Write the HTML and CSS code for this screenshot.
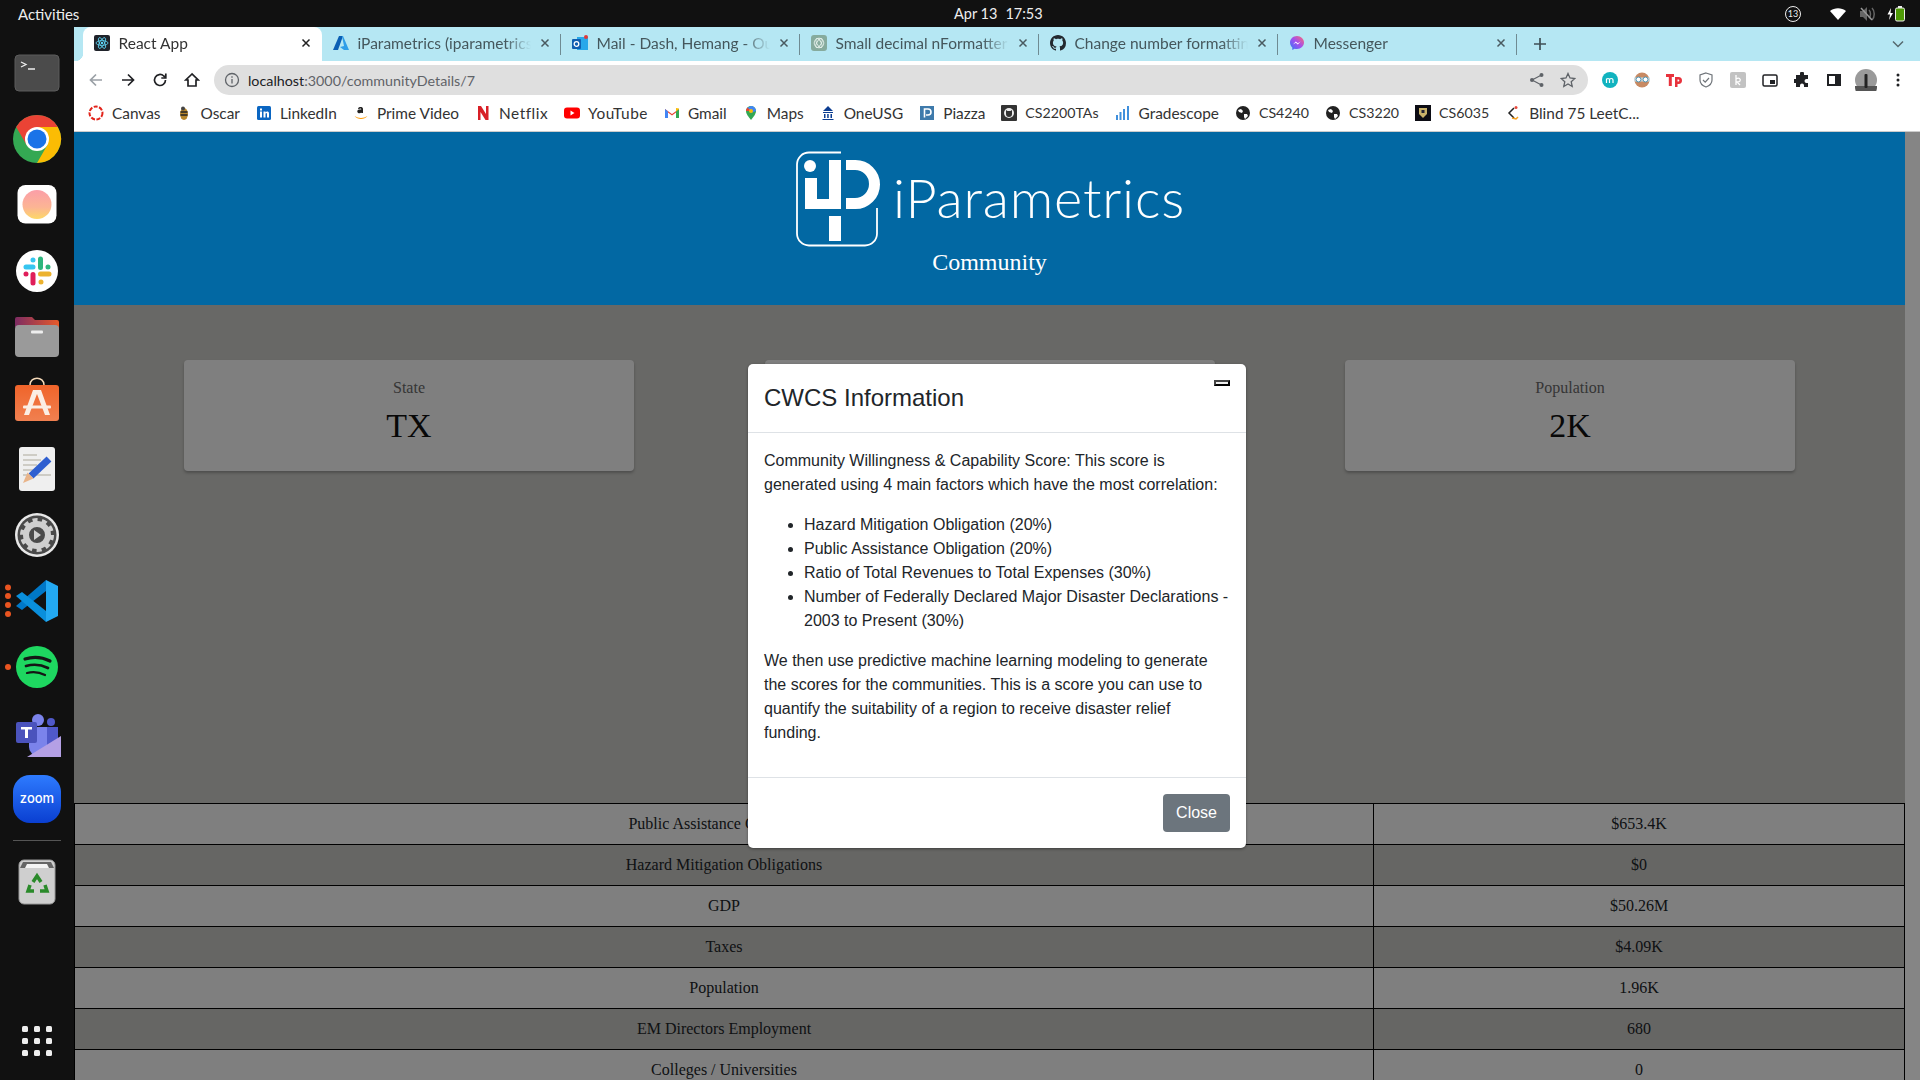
FILE: index.html
```html
<!DOCTYPE html>
<html lang="en">
<head>
    <meta charset="UTF-8">
    <meta name="viewport" content="width=device-width, initial-scale=1.0">
    <title>React App</title>
    <link rel="stylesheet" href="styles.css">
</head>
<body>
    <!-- Desktop top bar -->
    <div class="topbar">
        <div class="activities">Activities</div>
        <div class="clock"><span>Apr 13</span><span>17:53</span></div>
        <div class="status">
            <svg class="status-badge" width="18" height="18" viewBox="0 0 18 18"><circle cx="9" cy="9" r="7.500" fill="none" stroke="#eee"/><text x="9" y="12" class="badge-num">13</text></svg>
            <svg width="18" height="18" viewBox="0 0 18 18"><path d="M1 6c4.500-3.800 11.500-3.800 16 0l-8 9z" fill="#fff"/></svg>
            <svg width="18" height="18" viewBox="0 0 18 18"><path d="M2 6h3l4-4v14l-4-4H2z" fill="#666"/><path d="M11 5c2 2 2 6 0 8M14 3c3 3 3 9 0 12" fill="none" stroke="#666" stroke-width="1.500"/><path d="M3 3l11 12" stroke="#999" stroke-width="1.500"/></svg>
            <svg width="20" height="18" viewBox="0 0 20 18"><path d="M4 3L0.500 9.500H3L2 15l4-7H3.500z" fill="#fff"/><rect x="8.500" y="3" width="9" height="13" rx="1.500" fill="#4e9a06" stroke="#eee"/><rect x="11" y="1" width="4" height="2" fill="#eee"/></svg>
        </div>
    </div>

    <div class="desktop">
        <!-- Ubuntu dock -->
        <nav class="dock">
            <svg class="dock-item" viewBox="0 0 74 66"><rect x="15" y="15" width="44" height="36" rx="4" fill="#4b4b4b" stroke="#5c5c5c"/><path d="M21 22l5 2.500-5 2.500M28 29h7" fill="none" stroke="#eee" stroke-width="1.300"/></svg>
            <svg class="dock-item" viewBox="0 0 74 66"><circle cx="37" cy="33" r="24" fill="#34a853"/><path d="M16.200 21A24 24 0 0 1 57.800 21H37L26.600 39z" fill="#ea4335"/><path d="M57.800 21A24 24 0 0 1 37 57L47.400 39 37 21z" fill="#fbbc04"/><circle cx="37" cy="33" r="12" fill="#fff"/><circle cx="37" cy="33" r="9.500" fill="#1a73e8"/></svg>
            <svg class="dock-item" viewBox="0 0 74 66"><defs><linearGradient id="rose" x1="0" y1="0" x2="0" y2="1"><stop offset="0" stop-color="#fb9ea8"/><stop offset=".6" stop-color="#fcb594"/><stop offset="1" stop-color="#fdd867"/></linearGradient></defs><rect x="17.500" y="13" width="39" height="38.500" rx="8" fill="#fff"/><circle cx="37" cy="32.500" r="14.500" fill="url(#rose)"/></svg>
            <svg class="dock-item" viewBox="0 0 74 66"><circle cx="37" cy="33" r="21" fill="#fff"/><g stroke-width="5" stroke-linecap="round" fill="none"><path d="M26 29h7M33 22h0" stroke="#36c5f0"/><path d="M40.500 21v8.500M48 29h0" stroke="#2eb67d"/><path d="M40.500 36h8.500M41 44h0" stroke="#ecb22e"/><path d="M33 36.500v8.500M26 36h0" stroke="#e01e5a"/></g></svg>
            <svg class="dock-item" viewBox="0 0 74 66"><defs><linearGradient id="folder" x1="0" y1="0" x2="1" y2="0"><stop offset="0" stop-color="#7d2c63"/><stop offset="1" stop-color="#e65a2a"/></linearGradient></defs><path d="M15 23v-8a2 2 0 0 1 2-2h15l3 3h22a2 2 0 0 1 2 2v8z" fill="url(#folder)"/><rect x="15" y="21" width="44" height="32" rx="4" fill="#9a9a9a"/><rect x="31" y="26.500" width="12" height="3" rx="1" fill="#eee"/></svg>
            <svg class="dock-item" viewBox="0 0 74 66"><defs><linearGradient id="bag" x1="0" y1="0" x2="0" y2="1"><stop offset="0" stop-color="#f0642a"/><stop offset="1" stop-color="#f08050"/></linearGradient></defs><path d="M30 15c0-9 14-9 14 0" fill="none" stroke="#f5d9b8" stroke-width="1.500"/><rect x="15" y="15" width="44" height="36" rx="3" fill="url(#bag)"/><path d="M33 20h8l9 25h-5l-8-21-8 21h-5z" fill="#fbeee4"/><rect x="23" y="35.500" width="28" height="3" rx="1" fill="#fbeee4"/></svg>
            <svg class="dock-item" viewBox="0 0 74 66"><rect x="19" y="11" width="36" height="44" rx="3" fill="#efefef"/><path d="M23 19h14M23 24h18M23 29h14M23 34h10M23 39h28" stroke="#c4c1b8" stroke-width="1.500"/><path d="M49 23L31 40" stroke="#2f5fd0" stroke-width="7"/><path d="M27.500 36.500l6 6L23 47z" fill="#e8b48a"/></svg>
            <svg class="dock-item" viewBox="0 0 74 66"><circle cx="37" cy="33" r="22" fill="#e8e8e8"/><circle cx="37" cy="33" r="19.500" fill="#4a4a4a"/><circle cx="37" cy="33" r="11" fill="none" stroke="#cfcfcf" stroke-width="6"/><circle cx="37" cy="33" r="15" fill="none" stroke="#cfcfcf" stroke-width="4" stroke-dasharray="5 4.400"/><path d="M34 28l7 5-7 5z" fill="#cfcfcf"/></svg>
            <svg class="dock-item" viewBox="0 0 74 66"><g fill="#e95420"><circle cx="8" cy="19.500" r="3"/><circle cx="8" cy="28" r="3"/><circle cx="8" cy="37" r="3"/><circle cx="8" cy="46" r="3"/></g><path d="M46 12l12 6v30l-12 6z" fill="#23a9f2"/><path d="M46 12v11L22 42l-6-4z" fill="#0078c8"/><path d="M16 28l6-4 24 19v11z" fill="#0a8fdc"/></svg>
            <svg class="dock-item" viewBox="0 0 74 66"><circle cx="8" cy="33" r="3" fill="#e95420"/><circle cx="37" cy="33" r="21" fill="#1ed760"/><g fill="none" stroke="#151515" stroke-linecap="round"><path d="M25 25c8-2.500 17-2 25 2" stroke-width="3.200"/><path d="M26 32c7-2 15-1.500 22 2" stroke-width="2.700"/><path d="M27 39c6-1.500 12-1 18 2" stroke-width="2.200"/></g></svg>
            <svg class="dock-item" viewBox="0 0 74 66"><circle cx="38" cy="20" r="6" fill="#7b83eb"/><circle cx="51" cy="22" r="4" fill="#5059c9"/><path d="M29 27h18v20a9 9 0 0 1-18 0z" fill="#7b83eb"/><path d="M47 27h11v16l-11 3z" fill="#5059c9"/><path d="M61 36v21H27z" fill="#b4a0e5"/><rect x="16" y="22" width="21" height="21" rx="2" fill="#4b53bc"/><path d="M21 27h11v2.500h-4V38h-3v-8.500h-4z" fill="#fff"/></svg>
            <svg class="dock-item" viewBox="0 0 74 66"><defs><linearGradient id="zoomblue" x1="0" y1="0" x2="0" y2="1"><stop offset="0" stop-color="#2e7bff"/><stop offset="1" stop-color="#0a3fd1"/></linearGradient></defs><rect x="13" y="9" width="48" height="48" rx="17" fill="url(#zoomblue)"/><text x="37" y="37" class="zoom-word">zoom</text></svg>
            <div class="dock-sep"></div>
            <svg class="dock-item" viewBox="0 0 74 66"><rect x="19" y="11" width="36" height="44" rx="5" fill="#cfcfcf" stroke="#999"/><path d="M20 19l3-6h28l3 6z" fill="#666"/><path d="M25 19l2-4h20l2 4z" fill="#f4f4f4"/><g fill="none" stroke="#2a8a2a" stroke-width="3.500"><path d="M33 33l4-6 4 6"/><path d="M45 36l2 6h-7"/><path d="M34 42h-6l2-6"/></g></svg>
            <svg class="dock-grid" viewBox="0 0 74 66"><g fill="#eee"><rect x="22" y="18" width="6" height="6" rx="1.500"/><rect x="34" y="18" width="6" height="6" rx="1.500"/><rect x="46" y="18" width="6" height="6" rx="1.500"/><rect x="22" y="30" width="6" height="6" rx="1.500"/><rect x="34" y="30" width="6" height="6" rx="1.500"/><rect x="46" y="30" width="6" height="6" rx="1.500"/><rect x="22" y="42" width="6" height="6" rx="1.500"/><rect x="34" y="42" width="6" height="6" rx="1.500"/><rect x="46" y="42" width="6" height="6" rx="1.500"/></g></svg>
        </nav>

        <div class="browser">
            <!-- Tab strip -->
            <div class="tabstrip">
                <div class="tab active">
                    <svg class="favicon" viewBox="0 0 16 16"><rect width="16" height="16" rx="2" fill="#20232a"/><g fill="none" stroke="#61dafb" stroke-width=".8"><ellipse cx="8" cy="8" rx="6" ry="2.400"/><ellipse cx="8" cy="8" rx="6" ry="2.400" transform="rotate(60 8 8)"/><ellipse cx="8" cy="8" rx="6" ry="2.400" transform="rotate(120 8 8)"/></g><circle cx="8" cy="8" r="1.200" fill="#61dafb"/></svg>
                    <span class="tab-title">React App</span>
                    <svg class="tab-close" viewBox="0 0 10 10"><path d="M1.500 1.500l7 7M8.500 1.500l-7 7"/></svg>
                </div>
                <div class="tab">
                    <svg class="favicon" viewBox="0 0 16 16"><path d="M6 1h4L5 15H0z" fill="#0a5fb4"/><path d="M9 1h1l6 14h-5l-4-3 4-1z" fill="#2f9ee8"/></svg>
                    <span class="tab-title">iParametrics (iparametrics)</span>
                    <svg class="tab-close" viewBox="0 0 10 10"><path d="M1.500 1.500l7 7M8.500 1.500l-7 7"/></svg>
                </div>
                <div class="tab">
                    <svg class="favicon" viewBox="0 0 16 16"><rect x="5" y="2" width="11" height="13" fill="#28a8ea"/><rect y="4" width="9" height="10" rx="1" fill="#0f5fb0"/><circle cx="4.500" cy="9" r="2.300" fill="none" stroke="#fff" stroke-width="1.300"/><circle cx="14" cy="2" r="2" fill="#e03a3a"/></svg>
                    <span class="tab-title">Mail - Dash, Hemang - Outlook</span>
                    <svg class="tab-close" viewBox="0 0 10 10"><path d="M1.500 1.500l7 7M8.500 1.500l-7 7"/></svg>
                </div>
                <div class="tab">
                    <svg class="favicon" viewBox="0 0 16 16"><rect width="16" height="16" rx="3" fill="#86ab9d"/><g fill="none" stroke="#e4efea" stroke-width=".9"><circle cx="8" cy="8" r="4.800"/><ellipse cx="8" cy="8" rx="5" ry="2.200" transform="rotate(60 8 8)"/><ellipse cx="8" cy="8" rx="5" ry="2.200" transform="rotate(120 8 8)"/></g></svg>
                    <span class="tab-title">Small decimal nFormatter</span>
                    <svg class="tab-close" viewBox="0 0 10 10"><path d="M1.500 1.500l7 7M8.500 1.500l-7 7"/></svg>
                </div>
                <div class="tab">
                    <svg class="favicon" viewBox="0 0 16 16"><path fill="#24292f" d="M8 0C3.580 0 0 3.580 0 8c0 3.540 2.290 6.530 5.470 7.590.4.070.55-.17.55-.38 0-.19-.01-.82-.01-1.490-2.010.37-2.530-.49-2.690-.94-.09-.23-.48-.94-.82-1.130-.28-.15-.68-.52-.01-.53.63-.01 1.080.58 1.230.82.72 1.210 1.870.87 2.330.66.07-.52.28-.87.51-1.070-1.780-.2-3.640-.89-3.640-3.950 0-.87.31-1.590.82-2.150-.08-.2-.36-1.020.08-2.120 0 0 .67-.21 2.200.82.64-.18 1.320-.27 2-.27.68 0 1.360.09 2 .27 1.530-1.040 2.200-.82 2.200-.82.44 1.100.16 1.920.08 2.120.51.56.82 1.270.82 2.150 0 3.070-1.870 3.750-3.650 3.950.29.25.54.73.54 1.480 0 1.070-.01 1.930-.01 2.200 0 .21.15.46.55.38A8.013 8.013 0 0016 8c0-4.420-3.580-8-8-8z"/></svg>
                    <span class="tab-title">Change number formatting</span>
                    <svg class="tab-close" viewBox="0 0 10 10"><path d="M1.500 1.500l7 7M8.500 1.500l-7 7"/></svg>
                </div>
                <div class="tab">
                    <svg class="favicon" viewBox="0 0 16 16"><defs><linearGradient id="msgr" x1="0" y1="1" x2="1" y2="0"><stop offset="0" stop-color="#2d7cf6"/><stop offset=".5" stop-color="#a050f0"/><stop offset="1" stop-color="#ff6a70"/></linearGradient></defs><path d="M8 1C4 1 1 3.900 1 7.600c0 2 .9 3.700 2.300 4.900V15l2.300-1.300c.8.2 1.600.3 2.400.3 4 0 7-2.900 7-6.400S12 1 8 1z" fill="url(#msgr)"/><path d="M4 9.500l2.800-3 2 1.700 2.800-1.700-2.800 3-2-1.700z" fill="#fff"/></svg>
                    <span class="tab-title">Messenger</span>
                    <svg class="tab-close" viewBox="0 0 10 10"><path d="M1.500 1.500l7 7M8.500 1.500l-7 7"/></svg>
                </div>
                <svg class="new-tab" viewBox="0 0 14 14"><path d="M7 1v12M1 7h12"/></svg>
                <svg class="tab-search" viewBox="0 0 12 8"><path d="M1 1.500l5 5 5-5"/></svg>
            </div>

            <!-- Toolbar -->
            <div class="toolbar">
                <svg class="nav-btn" viewBox="0 0 16 16"><path d="M14 8H2.500M8 2.500L2.500 8 8 13.500" stroke="#9aa0a6"/></svg>
                <svg class="nav-btn" viewBox="0 0 16 16"><path d="M2 8h11.500M8 2.500L13.500 8 8 13.500"/></svg>
                <svg class="nav-btn" viewBox="0 0 16 16"><path d="M13.500 8A5.500 5.500 0 1 1 11.800 4L13.500 5.500"/><path d="M13.800 1.500v4.500H9.300" /></svg>
                <svg class="nav-btn" viewBox="0 0 16 16"><path d="M8 2L1.800 8H4v6h8V8h2.200z"/></svg>
                <div class="omnibox">
                    <svg class="info-icon" viewBox="0 0 16 16"><circle cx="8" cy="8" r="6.500"/><path d="M8 7v4.500M8 4.200v1.500"/></svg>
                    <span class="url"><span class="url-host">localhost</span>:3000/communityDetails/7</span>
                    <svg class="omni-icon" viewBox="0 0 16 16"><circle cx="3" cy="8" r="2" fill="#5f6368"/><circle cx="12.500" cy="3" r="2" fill="#5f6368"/><circle cx="12.500" cy="13" r="2" fill="#5f6368"/><path d="M3 8l9.500-5M3 8l9.500 5" stroke="#5f6368" fill="none" stroke-width="1.200"/></svg>
                    <svg class="omni-icon" viewBox="0 0 16 16"><path d="M8 1.500l2 4.500 4.800.5-3.600 3.200 1 4.800L8 12l-4.200 2.500 1-4.800L1.200 6.500 6 6z" fill="none" stroke="#5f6368" stroke-width="1.300"/></svg>
                </div>
                <div class="extensions">
                    <svg class="ext" viewBox="0 0 16 16"><circle cx="8" cy="8" r="8" fill="#11b3bf"/><path d="M4.500 11V6.500M4.500 8c0-2 3-2 3 0v3M7.500 8c0-2 3.500-2 3.500 0v3" stroke="#fff" fill="none" stroke-width="1.200"/></svg>
                    <svg class="ext" viewBox="0 0 16 16"><circle cx="8" cy="8" r="7.500" fill="#c88a63"/><rect x="0" y="5.500" width="16" height="4" fill="#cfd8dc"/><circle cx="4.500" cy="7.500" r="2.500" fill="#fff" stroke="#4a90b0"/><circle cx="11.500" cy="7.500" r="2.500" fill="#fff" stroke="#4a90b0"/></svg>
                    <svg class="ext" viewBox="0 0 16 16"><path d="M0 2h8v3H5.800v9H2.800V5H0zM9 5h3.500a3 3 0 0 1 0 7H11.500v3H9zm2.500 2.500v2h.8a1 1 0 0 0 0-2z" fill="#e8323c"/></svg>
                    <svg class="ext" viewBox="0 0 16 16"><path d="M8 1l6 2v5c0 3.500-2.500 5.800-6 7-3.500-1.200-6-3.500-6-7V3z" fill="none" stroke="#70757a" stroke-width="1.200"/><path d="M5 8l2.200 2.200L11 6" fill="none" stroke="#70757a" stroke-width="1.200"/></svg>
                    <svg class="ext" viewBox="0 0 16 16"><rect width="16" height="16" rx="2" fill="#c2c2c2"/><path d="M6 3v10M6 7c3-2 5 0 4 2-.5 1-2 1-3 1l3 3" fill="none" stroke="#fff" stroke-width="1.300"/></svg>
                    <svg class="ext" viewBox="0 0 16 16"><rect x="1" y="3" width="14" height="11" rx="1.500" fill="none" stroke="#202124" stroke-width="1.500"/><rect x="8" y="8" width="5" height="4" fill="#202124"/></svg>
                    <svg class="ext" viewBox="0 0 16 16"><path d="M6 1.500a2 2 0 0 1 4 0V3h4v4h-1.500a2 2 0 0 0 0 4H14v4h-4v-1.500a2 2 0 0 0-4 0V15H2v-4H.5a2 2 0 0 1 0-4H2V3h4z" fill="#202124"/></svg>
                    <svg class="ext" viewBox="0 0 16 16"><rect x="1" y="2" width="14" height="12" fill="#202124"/><rect x="3" y="4" width="6" height="8" fill="#fff"/></svg>
                    <svg class="avatar" viewBox="0 0 22 22"><circle cx="11" cy="11" r="11" fill="#9a9a9a"/><path d="M0 17h22v1a11 11 0 0 1-22 0z" fill="#555"/><rect x="9.500" y="5" width="3" height="14" rx="1" fill="#222"/></svg>
                    <svg class="ext" viewBox="0 0 16 16"><circle cx="8" cy="3" r="1.500" fill="#202124"/><circle cx="8" cy="8" r="1.500" fill="#202124"/><circle cx="8" cy="13" r="1.500" fill="#202124"/></svg>
                </div>
            </div>

            <!-- Bookmarks bar -->
            <div class="bookmarks">
                <a class="bookmark"><svg viewBox="0 0 16 16"><circle cx="8" cy="8" r="6.500" fill="none" stroke="#e2231a" stroke-width="2" stroke-dasharray="4 1.500"/></svg>Canvas</a>
                <a class="bookmark"><svg viewBox="0 0 16 16"><ellipse cx="8" cy="9" rx="4" ry="6" fill="#b8862b"/><path d="M4.500 7h7M4.500 10h7" stroke="#222" stroke-width="1.500"/><circle cx="7" cy="3.500" r="2" fill="#444"/></svg>Oscar</a>
                <a class="bookmark"><svg viewBox="0 0 16 16"><rect x="1" y="1" width="14" height="14" rx="1.500" fill="#0a66c2"/><path d="M4 6.500h2v6H4zM4 3.500h2v2H4zM7.500 6.500h2v1c1-1.500 3.500-1.300 3.500 1v4h-2V9c0-1.200-1.500-1.200-1.500 0v3.500h-2z" fill="#fff"/></svg>LinkedIn</a>
                <a class="bookmark"><svg viewBox="0 0 16 16"><path d="M5 3.500c1-2 5-2 5 .5v4h-1.700V7.500c-1 1.200-4 1-4-1 0-2 2.500-2 4-2 0-1.500-1.700-1.500-2.500 0z" fill="#222"/><path d="M1.500 11c4 2.500 9 2.500 13 0-3 4-10 4-13 0z" fill="#f90"/></svg>Prime Video</a>
                <a class="bookmark bookmark-wide"><svg viewBox="0 0 16 16"><path d="M3 1h3l5 8V1h2.500v14h-3L5.500 7v8H3z" fill="#d81f26"/></svg>Netflix</a>
                <a class="bookmark bookmark-wide"><svg viewBox="0 0 16 16"><rect y="2.500" width="16" height="11" rx="3" fill="#f00"/><path d="M6.500 5.500l4 2.500-4 2.500z" fill="#fff"/></svg>YouTube</a>
                <a class="bookmark"><svg viewBox="0 0 16 16"><path d="M1 13V4l7 5 7-5v9h-3V7.500L8 10.500 4 7.500V13z" fill="#ea4335"/><path d="M1 13V4l3 2.500V13z" fill="#4285f4"/><path d="M15 13V4l-3 2.500V13z" fill="#34a853"/><path d="M12 6.500L15 4v-.5L12 3z" fill="#fbbc04"/></svg>Gmail</a>
                <a class="bookmark"><svg viewBox="0 0 16 16"><path d="M8 1a5 5 0 0 0-5 5c0 3.500 5 9 5 9s5-5.500 5-9a5 5 0 0 0-5-5z" fill="#34a853"/><path d="M4 3L8 1a5 5 0 0 1 5 5L8 8z" fill="#4285f4"/><path d="M3 6a5 5 0 0 1 1.500-3.500L8 6z" fill="#ea4335"/><circle cx="8" cy="6" r="2" fill="#fbbc04"/></svg>Maps</a>
                <a class="bookmark"><svg viewBox="0 0 16 16"><path d="M8 1l5 5H3zM3 7h10v1H3zM4 9h1.500v4H4zM7.200 9h1.500v4H7.200zM10.500 9H12v4h-1.500zM2.500 14h11v1h-11z" fill="#0b3d91"/></svg>OneUSG</a>
                <a class="bookmark"><svg viewBox="0 0 16 16"><rect x="1" y="1" width="14" height="14" fill="#3e7aab"/><path d="M5.500 12.500V4h3.500a3 3 0 0 1 0 6H7" fill="none" stroke="#fff" stroke-width="1.600"/></svg>Piazza</a>
                <a class="bookmark bookmark-num"><svg viewBox="0 0 16 16"><rect width="16" height="16" rx="1" fill="#333"/><circle cx="8" cy="8" r="5" fill="#eee"/><path d="M5 5l1.500 1h3L11 5v4a3 3 0 0 1-6 0z" fill="#333"/></svg>CS2200TAs</a>
                <a class="bookmark"><svg viewBox="0 0 16 16"><g fill="#3f8fdc"><rect x="1" y="10" width="2" height="5"/><rect x="4.500" y="7" width="2" height="8"/><rect x="8" y="4" width="2" height="11"/><rect x="12" y="1" width="2" height="14"/></g></svg>Gradescope</a>
                <a class="bookmark bookmark-num"><svg viewBox="0 0 16 16"><circle cx="8" cy="8" r="7" fill="#222"/><path d="M3 5l3-1 2 2-1 2-3-1zM9 9l3 0 1 2-3 3-1-2z" fill="#fff"/></svg>CS4240</a>
                <a class="bookmark bookmark-num"><svg viewBox="0 0 16 16"><circle cx="8" cy="8" r="7" fill="#222"/><path d="M3 5l3-1 2 2-1 2-3-1zM9 9l3 0 1 2-3 3-1-2z" fill="#fff"/></svg>CS3220</a>
                <a class="bookmark bookmark-num"><svg viewBox="0 0 16 16"><rect width="16" height="16" fill="#0c0c14"/><path d="M4 3h8v6l-4 4-4-4z" fill="#c9b26a"/><rect x="6.500" y="5" width="3" height="3" fill="#223"/></svg>CS6035</a>
                <a class="bookmark"><svg viewBox="0 0 16 16"><path d="M9 3L4 8l5 5" fill="none" stroke="#222" stroke-width="1.500"/><path d="M7 13l4 1 2-2" fill="none" stroke="#f89f1b" stroke-width="1.500"/><circle cx="11" cy="2.500" r="1.500" fill="#e8483c"/></svg>Blind 75 LeetC...</a>
            </div>

            <!-- Page -->
            <div class="viewport">
                <div class="page">
                    <header class="site-header">
                        <div class="logo">
                            <svg class="logo-mark" viewBox="5 5 90 100">
                                <path d="M52 7.500H20a12 12 0 0 0-12 12V88.500a12 12 0 0 0 12 12H76a12 12 0 0 0 12-12V63" fill="none" stroke="#fff" stroke-width="1.800"/>
                                <circle cx="21" cy="21" r="6" fill="#fff"/>
                                <path d="M16 33H28V54H40V15H52V64H16z" fill="#fff"/>
                                <path d="M57 15h9.500a24.500 24.500 0 0 1 0 49H57V53h9a14 14 0 0 0 0-28H57z" fill="#fff"/>
                                <rect x="40" y="71" width="12" height="25" fill="#fff"/>
                            </svg>
                            <span class="logo-text">iParametrics</span>
                        </div>
                        <h1>Community</h1>
                    </header>

                    <main class="details">
                        <div class="cards">
                            <div class="card">
                                <div class="card-label">State</div>
                                <div class="card-value">TX</div>
                            </div>
                            <div class="card">
                                <div class="card-label">CWCS</div>
                                <div class="card-value">&nbsp;</div>
                            </div>
                            <div class="card">
                                <div class="card-label">Population</div>
                                <div class="card-value">2K</div>
                            </div>
                        </div>

                        <table class="stats">
                            <colgroup><col class="stats-name"><col></colgroup>
                            <tr><td>Public Assistance Obligations</td><td>$653.4K</td></tr>
                            <tr><td>Hazard Mitigation Obligations</td><td>$0</td></tr>
                            <tr><td>GDP</td><td>$50.26M</td></tr>
                            <tr><td>Taxes</td><td>$4.09K</td></tr>
                            <tr><td>Population</td><td>1.96K</td></tr>
                            <tr><td>EM Directors Employment</td><td>680</td></tr>
                            <tr><td>Colleges / Universities</td><td>0</td></tr>
                        </table>

                        <div class="backdrop"></div>

                        <div class="modal">
                            <div class="modal-header">
                                <h4>CWCS Information</h4>
                                <button class="modal-x" type="button"></button>
                            </div>
                            <div class="modal-body">
                                <p>Community Willingness &amp; Capability Score: This score is generated using 4 main factors which have the most correlation:</p>
                                <ul>
                                    <li>Hazard Mitigation Obligation (20%)</li>
                                    <li>Public Assistance Obligation (20%)</li>
                                    <li>Ratio of Total Revenues to Total Expenses (30%)</li>
                                    <li>Number of Federally Declared Major Disaster Declarations - 2003 to Present (30%)</li>
                                </ul>
                                <p>We then use predictive machine learning modeling to generate the scores for the communities. This is a score you can use to quantify the suitability of a region to receive disaster relief funding.</p>
                            </div>
                            <div class="modal-footer">
                                <button class="btn-close" type="button">Close</button>
                            </div>
                        </div>
                    </main>
                </div>
                <div class="scrollbar"></div>
            </div>
        </div>
    </div>
</body>
</html>
```

FILE: styles.css
```css
* {
    box-sizing: border-box;
}

html, body {
    margin: 0;
    width: 1920px;
    height: 1080px;
    overflow: hidden;
    background: #111;
}

body {
    font-family: 'Lato', 'Noto Sans', sans-serif;
    display: flex;
    flex-direction: column;
}

/* Top bar */
.topbar {
    height: 27px;
    flex: none;
    display: flex;
    align-items: center;
    background: #111;
    color: #eee;
    font-size: 15px;
}

.activities {
    width: 954px;
    padding-left: 18px;
}

.clock {
    display: flex;
    gap: 8px;
    font-size: 14.500px;
}

.status {
    margin-left: auto;
    padding-right: 13px;
    display: flex;
    align-items: center;
    gap: 11px;
}

.status-badge {
    margin-right: 16px;
}

.badge-num {
    font-size: 9px;
    fill: #eee;
    text-anchor: middle;
}

.desktop {
    flex: 1;
    display: flex;
    min-height: 0;
}

/* Dock */
.dock {
    width: 74px;
    flex: none;
    display: flex;
    flex-direction: column;
    padding-top: 13px;
    padding-bottom: 6px;
    background: #111;
}

.dock-item, .dock-grid {
    width: 74px;
    height: 66px;
    flex: none;
}

.dock-grid {
    margin-top: auto;
}

.dock-sep {
    height: 1px;
    flex: none;
    margin: 8px 13px 8px;
    background: #555;
}

.zoom-word {
    font-family: 'Inter', sans-serif;
    font-size: 13px;
    font-weight: 500;
    fill: #fff;
    text-anchor: middle;
}

/* Browser */
.browser {
    flex: 1;
    min-width: 0;
    display: flex;
    flex-direction: column;
    background: #fff;
}

.tabstrip {
    height: 34px;
    flex: none;
    display: flex;
    align-items: stretch;
    padding-left: 8.5px;
    background: #b5e7f3;
    color: #45575c;
    font-size: 15.500px;
}

.tab {
    position: relative;
    width: 239px;
    flex: none;
    display: flex;
    align-items: center;
    gap: 9px;
    padding: 0 11px 2px 11px;
}

.tab::after {
    content: "";
    position: absolute;
    right: 0;
    top: 7px;
    bottom: 6px;
    width: 1px;
    background: #6f8b92;
}

.tab.active {
    background: #fff;
    color: #333;
    border-radius: 8px 8px 0 0;
}

.tab.active::after {
    display: none;
}

.tab.active::before {
    content: "";
    position: absolute;
    left: -8px;
    bottom: 0;
    width: 8px;
    height: 8px;
    background: radial-gradient(circle at 0 0, transparent 8px, #fff 8.5px);
}

.favicon {
    width: 16px;
    height: 16px;
    flex: none;
}

.tab-title {
    flex: 1;
    min-width: 0;
    white-space: nowrap;
    overflow: hidden;
    -webkit-mask-image: linear-gradient(to right, #000 85%, transparent);
    mask-image: linear-gradient(to right, #000 85%, transparent);
}

.tab-close {
    width: 10px;
    height: 10px;
    flex: none;
    fill: none;
    stroke: #4a5a60;
    stroke-width: 1.500;
}

.tab.active .tab-close {
    stroke: #222;
}

.new-tab {
    width: 14px;
    height: 14px;
    align-self: center;
    margin-left: 16px;
    fill: none;
    stroke: #3f4f55;
    stroke-width: 1.700;
}

.tab-search {
    width: 12px;
    height: 8px;
    align-self: center;
    margin-left: auto;
    margin-right: 16px;
    fill: none;
    stroke: #56686e;
    stroke-width: 1.500;
}

/* Toolbar */
.toolbar {
    height: 34px;
    flex: none;
    display: flex;
    align-items: flex-start;
    padding: 4px 0 0 14px;
}

.nav-btn {
    width: 16px;
    height: 16px;
    flex: none;
    margin: 7px 16px 0 0;
    fill: none;
    stroke: #202124;
    stroke-width: 1.700;
}

.omnibox {
    width: 1374px;
    height: 30px;
    flex: none;
    margin-left: -2px;
    display: flex;
    align-items: center;
    padding: 0 12px 0 10px;
    border-radius: 15px;
    background: #dfdfdf;
    font-size: 14.300px;
    color: #5f6368;
}

.info-icon {
    width: 16px;
    height: 16px;
    flex: none;
    fill: none;
    stroke: #5f6368;
    stroke-width: 1.300;
}

.url {
    flex: 1;
    margin-left: 8px;
}

.url-host {
    color: #202124;
}

.omni-icon {
    width: 16px;
    height: 16px;
    flex: none;
    margin-left: 15px;
}

.extensions {
    display: flex;
    align-items: center;
    height: 30px;
    padding-left: 6px;
}

.ext, .avatar {
    flex: none;
    margin: 0 8px;
}

.ext {
    width: 16px;
    height: 16px;
}

.avatar {
    width: 22px;
    height: 22px;
    margin: 0 5px;
}

/* Bookmarks */
.bookmarks {
    height: 37px;
    flex: none;
    display: flex;
    align-items: center;
    gap: 16px;
    padding-left: 14px;
    padding-bottom: 1px;
    border-bottom: 1px solid #ccc;
    font-size: 15.400px;
    color: #333;
}

.bookmark {
    display: flex;
    align-items: center;
    gap: 8px;
    white-space: nowrap;
}

.bookmark-wide {
    letter-spacing: 0.500px;
}

.bookmark-num {
    font-size: 14.200px;
}

.bookmark svg {
    width: 16px;
    height: 16px;
    flex: none;
}

/* Page */
.viewport {
    flex: 1;
    min-height: 0;
    display: flex;
}

.page {
    flex: 1;
    min-width: 0;
    display: flex;
    flex-direction: column;
    overflow: hidden;
    font-family: 'Liberation Serif', serif;
    font-size: 16px;
    color: #212529;
}

.scrollbar {
    width: 15px;
    flex: none;
    background: #858585;
}

.site-header {
    position: relative;
    z-index: 2;
    height: 173px;
    flex: none;
    background: #0268a3;
    color: #fff;
    text-align: center;
    padding-top: 18px;
}

.logo {
    height: 94px;
    display: flex;
    justify-content: center;
    align-items: flex-start;
    gap: 9px;
}

.logo-mark {
    width: 90px;
    height: 100px;
    flex: none;
}

.logo-text {
    font-family: 'Lato', sans-serif;
    font-weight: 300;
    font-size: 54px;
    line-height: 96px;
    letter-spacing: 0.800px;
}

.site-header h1 {
    margin: 0;
    font-size: 24px;
    font-weight: 400;
    line-height: 36px;
}

.details {
    position: relative;
    flex: 1;
    min-height: 0;
    background: #d0d0cc;
}

.cards {
    display: flex;
    justify-content: space-between;
    padding: 55px 110px 0;
}

.card {
    width: 450px;
    height: 111px;
    padding-top: 14px;
    background: #fff;
    border-radius: 4px;
    box-shadow: 0 2px 3px rgba(0, 0, 0, 0.25);
    text-align: center;
}

.card-label {
    line-height: 28px;
    color: #6c6c6c;
}

.card-value {
    margin-top: 2px;
    font-size: 34px;
    line-height: 44px;
    color: #111;
}

.stats {
    width: 100%;
    margin-top: 332px;
    border-collapse: collapse;
    background: #fff;
    text-align: center;
}

.stats-name {
    width: 1299px;
}

.stats td {
    padding: 8px;
    line-height: 24px;
    border: 1px solid #000;
}

.stats tr:nth-child(even) {
    background: #cdccc8;
}

.backdrop {
    position: absolute;
    inset: 0;
    background: rgba(0, 0, 0, 0.5);
}

.modal {
    position: absolute;
    left: 674px;
    top: 59px;
    width: 498px;
    background: #fff;
    border-radius: 5px;
    font-family: 'Liberation Sans', Arial, sans-serif;
    font-size: 16px;
    line-height: 24px;
    color: #212529;
    box-shadow: 0 1px 3px rgba(0, 0, 0, 0.4);
}

.modal-header {
    position: relative;
    height: 69px;
    padding: 16px;
    border-bottom: 1px solid #dee2e6;
}

.modal-header h4 {
    margin: 0;
    font-size: 24px;
    font-weight: 400;
    line-height: 36px;
}

.modal-x {
    position: absolute;
    top: 16px;
    right: 16px;
    width: 16px;
    height: 6px;
    padding: 0;
    background: #efefef;
    border: 2px outset #444;
}

.modal-body {
    padding: 16px;
}

.modal-body p {
    margin: 0 0 16px;
}

.modal-body ul {
    margin: 0 0 16px;
    padding-left: 40px;
}

.modal-footer {
    display: flex;
    justify-content: flex-end;
    padding: 16px;
    border-top: 1px solid #dee2e6;
}

.btn-close {
    height: 38px;
    padding: 0 13px;
    border: none;
    border-radius: 4px;
    background: #6c757d;
    color: #fff;
    font-family: inherit;
    font-size: 16px;
}
```
